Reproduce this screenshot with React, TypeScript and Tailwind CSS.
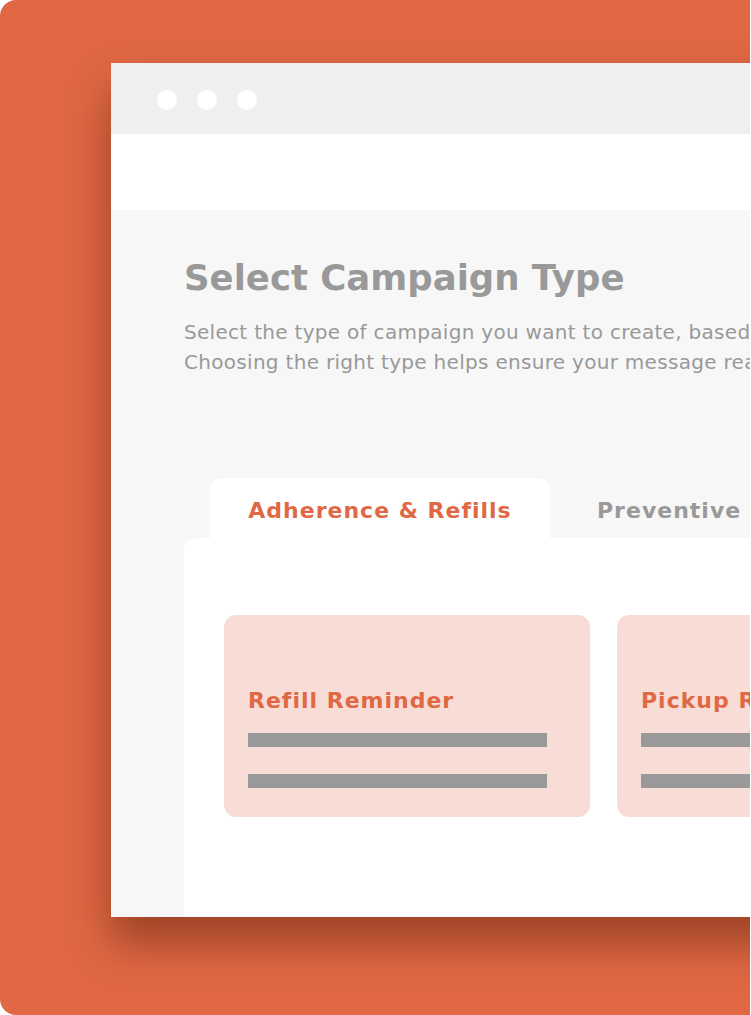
export default function App() {
  const font = { fontFamily: '"DejaVu Sans", sans-serif' };
  return (
    <div className="w-[751px] h-[1015px] bg-white overflow-hidden" style={font}>
      <div className="w-[750px] h-[1015px] bg-[#e06844] rounded-l-[16px] overflow-hidden pt-[63px] pl-[111px]">
        <div className="w-[700px] h-[854px] flex flex-col shadow-[0_26px_40px_rgba(90,30,10,0.5)]">
          <div className="h-[71px] bg-[#efefef] flex items-center gap-[20px] pl-[46px] pt-[3px] shrink-0">
            <div className="w-[20px] h-[20px] rounded-full bg-white" />
            <div className="w-[20px] h-[20px] rounded-full bg-white" />
            <div className="w-[20px] h-[20px] rounded-full bg-white" />
          </div>
          <div className="h-[76px] bg-white shrink-0" />
          <div className="flex-1 bg-[#f7f7f7] pl-[73px] pt-[44px] flex flex-col overflow-hidden">
            <h1 className="text-[35.5px] leading-[48px] font-bold text-[#999999] whitespace-nowrap">
              Select Campaign Type
            </h1>
            <p className="mt-[15px] text-[20px] leading-[30px] text-[#999999] tracking-[0.3px] whitespace-nowrap">
              Select the type of campaign you want to create, based on your goals.
              <br />
              Choosing the right type helps ensure your message reaches the right patients.
            </p>
            <div className="mt-[101px] flex items-end pl-[26px] whitespace-nowrap">
              <div className="w-[340px] h-[60px] pt-[5px] bg-white rounded-t-[12px] flex items-center justify-center text-[22px] font-bold text-[#e06844] tracking-[1px]">
                Adherence &amp; Refills
              </div>
              <div className="h-[60px] pt-[5px] pl-[47px] flex items-center text-[22px] font-bold text-[#999999] tracking-[1px]">
                Preventive Care
              </div>
            </div>
            <div className="flex-1 bg-white rounded-tl-[12px] pt-[77px] pl-[40px] flex gap-[27px]">
              {["Refill Reminder", "Pickup Reminder"].map((t) => (
                <div
                  key={t}
                  className="w-[366px] h-[202px] shrink-0 bg-[#f8dcd6] rounded-[12px] pl-[24px] pt-[70px] flex flex-col"
                >
                  <div className="text-[22px] leading-[32px] font-bold text-[#e06844] tracking-[1px] whitespace-nowrap">
                    {t}
                  </div>
                  <div className="mt-[16px] w-[299px] h-[14px] bg-[#999999]" />
                  <div className="mt-[27px] w-[299px] h-[14px] bg-[#999999]" />
                </div>
              ))}
            </div>
          </div>
        </div>
      </div>
    </div>
  );
}
